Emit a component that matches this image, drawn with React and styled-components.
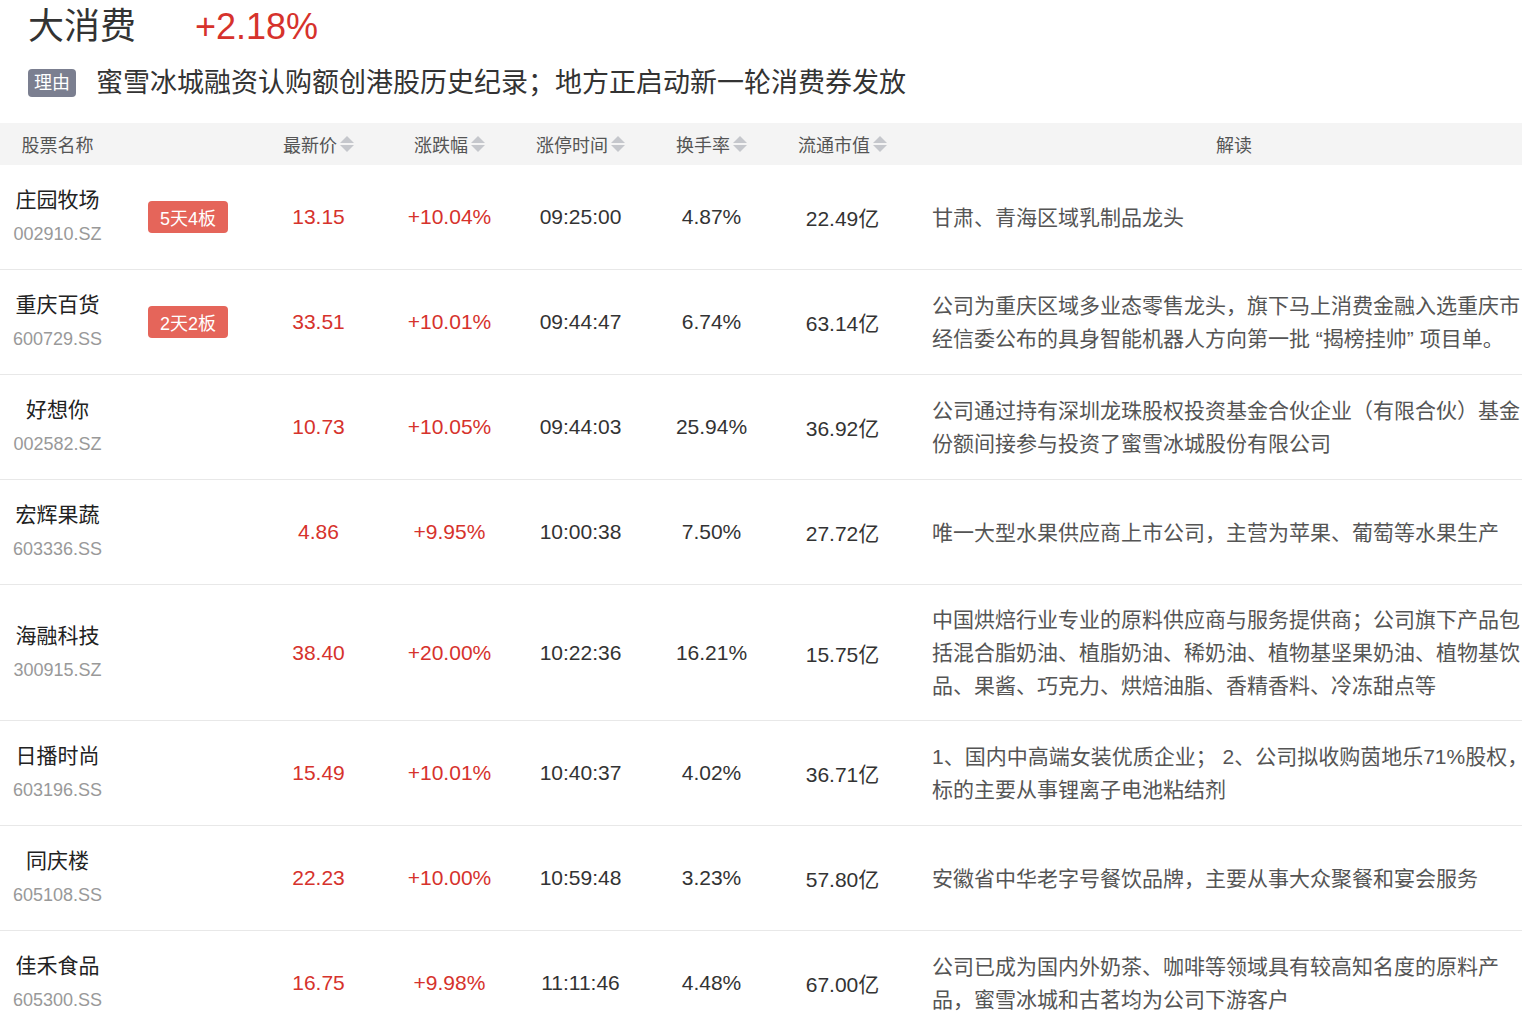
import React from "react";
import styled, { createGlobalStyle } from "styled-components";

const GlobalStyle = createGlobalStyle`
  html, body { margin: 0; padding: 0; background: #fff; }
  body {
    font-family: "Liberation Sans", Arial, "Noto Sans CJK SC", sans-serif;
    color: #333;
    overflow: hidden;
  }
`;

const Page = styled.div`
  width: 1522px;
  overflow: hidden;
`;

const TitleBlock = styled.div`
  padding: 0 0 0 28px;
  height: 123px;
  box-sizing: border-box;
`;

const TitleRow = styled.div`
  display: flex;
  align-items: center;
  height: 54px;
`;

const TitleName = styled.span`
  font-size: 36px;
  line-height: 54px;
  color: #333;
  width: 167px;
`;

const TitleChange = styled.span`
  font-size: 36px;
  line-height: 54px;
  color: #d6322c;
`;

const ReasonRow = styled.div`
  display: flex;
  align-items: center;
  gap: 20px;
  margin-top: 2px;
  height: 54px;
`;

const ReasonTag = styled.span`
  display: inline-flex;
  align-items: center;
  justify-content: center;
  height: 28px;
  padding: 0 6px;
  border-radius: 4px;
  background: #7b7f90;
  color: #fff;
  font-size: 18px;
  line-height: 28px;
`;

const ReasonText = styled.span`
  font-size: 27px;
  line-height: 34px;
  color: #333;
`;

const COLS = "115px 138px repeat(5, 131px) 652px";

const HeaderRow = styled.div`
  display: grid;
  grid-template-columns: ${COLS};
  width: 1560px;
  height: 42px;
  background: #f4f4f4;
  align-items: center;
`;

const HeadCell = styled.div`
  display: flex;
  align-items: center;
  justify-content: center;
  font-size: 18px;
  color: #555;
  gap: 3px;
`;

const SortIcon = () => (
  <svg width="14" height="18" viewBox="0 0 14 18">
    <path d="M7 1 L14 8 L0 8 Z" fill="#c5c7cc" />
    <path d="M7 17 L14 10 L0 10 Z" fill="#c5c7cc" />
  </svg>
);

const Row = styled.div`
  display: grid;
  grid-template-columns: ${COLS};
  width: 1560px;
  border-bottom: 1px solid #e8e8e8;
  align-items: center;
`;

const NameCell = styled.div`
  display: flex;
  flex-direction: column;
  align-items: center;
  padding: 18px 0;
`;

const StockName = styled.div`
  font-size: 21px;
  line-height: 34px;
  color: #222;
  white-space: nowrap;
`;

const StockCode = styled.div`
  font-size: 18px;
  line-height: 34px;
  color: #999;
`;

const BadgeCell = styled.div`
  display: flex;
  padding-left: 33px;
`;

const Badge = styled.span`
  display: inline-flex;
  align-items: center;
  height: 32px;
  padding: 0 12px;
  border-radius: 4px;
  background: #e5655a;
  color: #fff;
  font-size: 18px;
  white-space: nowrap;
`;

const NumCell = styled.div`
  text-align: center;
  font-size: 21px;
  color: ${(p) => (p.$red ? "#d6322c" : "#333")};
`;

const DescCell = styled.div`
  padding: 18px 24px;
  font-size: 21px;
  line-height: 33px;
  color: #555;
`;

const rows = [
  {
    name: "庄园牧场",
    code: "002910.SZ",
    badge: "5天4板",
    price: "13.15",
    chg: "+10.04%",
    time: "09:25:00",
    turn: "4.87%",
    cap: "22.49亿",
    desc: "甘肃、青海区域乳制品龙头",
  },
  {
    name: "重庆百货",
    code: "600729.SS",
    badge: "2天2板",
    price: "33.51",
    chg: "+10.01%",
    time: "09:44:47",
    turn: "6.74%",
    cap: "63.14亿",
    desc: "公司为重庆区域多业态零售龙头，旗下马上消费金融入选重庆市经信委公布的具身智能机器人方向第一批 “揭榜挂帅” 项目单。",
  },
  {
    name: "好想你",
    code: "002582.SZ",
    price: "10.73",
    chg: "+10.05%",
    time: "09:44:03",
    turn: "25.94%",
    cap: "36.92亿",
    desc: "公司通过持有深圳龙珠股权投资基金合伙企业（有限合伙）基金份额间接参与投资了蜜雪冰城股份有限公司",
  },
  {
    name: "宏辉果蔬",
    code: "603336.SS",
    price: "4.86",
    chg: "+9.95%",
    time: "10:00:38",
    turn: "7.50%",
    cap: "27.72亿",
    desc: "唯一大型水果供应商上市公司，主营为苹果、葡萄等水果生产",
  },
  {
    name: "海融科技",
    code: "300915.SZ",
    price: "38.40",
    chg: "+20.00%",
    time: "10:22:36",
    turn: "16.21%",
    cap: "15.75亿",
    desc: "中国烘焙行业专业的原料供应商与服务提供商；公司旗下产品包括混合脂奶油、植脂奶油、稀奶油、植物基坚果奶油、植物基饮品、果酱、巧克力、烘焙油脂、香精香料、冷冻甜点等",
  },
  {
    name: "日播时尚",
    code: "603196.SS",
    price: "15.49",
    chg: "+10.01%",
    time: "10:40:37",
    turn: "4.02%",
    cap: "36.71亿",
    desc: "1、国内中高端女装优质企业； 2、公司拟收购茵地乐71%股权，标的主要从事锂离子电池粘结剂",
  },
  {
    name: "同庆楼",
    code: "605108.SS",
    price: "22.23",
    chg: "+10.00%",
    time: "10:59:48",
    turn: "3.23%",
    cap: "57.80亿",
    desc: "安徽省中华老字号餐饮品牌，主要从事大众聚餐和宴会服务",
  },
  {
    name: "佳禾食品",
    code: "605300.SS",
    price: "16.75",
    chg: "+9.98%",
    time: "11:11:46",
    turn: "4.48%",
    cap: "67.00亿",
    desc: "公司已成为国内外奶茶、咖啡等领域具有较高知名度的原料产品，蜜雪冰城和古茗均为公司下游客户",
  },
];

export default function App() {
  return (
    <Page>
      <GlobalStyle />
      <TitleBlock>
        <TitleRow>
          <TitleName>大消费</TitleName>
          <TitleChange>+2.18%</TitleChange>
        </TitleRow>
        <ReasonRow>
          <ReasonTag>理由</ReasonTag>
          <ReasonText>蜜雪冰城融资认购额创港股历史纪录；地方正启动新一轮消费券发放</ReasonText>
        </ReasonRow>
      </TitleBlock>
      <HeaderRow>
        <HeadCell>股票名称</HeadCell>
        <HeadCell />
        <HeadCell>最新价<SortIcon /></HeadCell>
        <HeadCell>涨跌幅<SortIcon /></HeadCell>
        <HeadCell>涨停时间<SortIcon /></HeadCell>
        <HeadCell>换手率<SortIcon /></HeadCell>
        <HeadCell>流通市值<SortIcon /></HeadCell>
        <HeadCell>解读</HeadCell>
      </HeaderRow>
      {rows.map((r) => (
        <Row key={r.code}>
          <NameCell>
            <StockName>{r.name}</StockName>
            <StockCode>{r.code}</StockCode>
          </NameCell>
          <BadgeCell>{r.badge && <Badge>{r.badge}</Badge>}</BadgeCell>
          <NumCell $red>{r.price}</NumCell>
          <NumCell $red>{r.chg}</NumCell>
          <NumCell>{r.time}</NumCell>
          <NumCell>{r.turn}</NumCell>
          <NumCell>{r.cap}</NumCell>
          <DescCell>{r.desc}</DescCell>
        </Row>
      ))}
    </Page>
  );
}
